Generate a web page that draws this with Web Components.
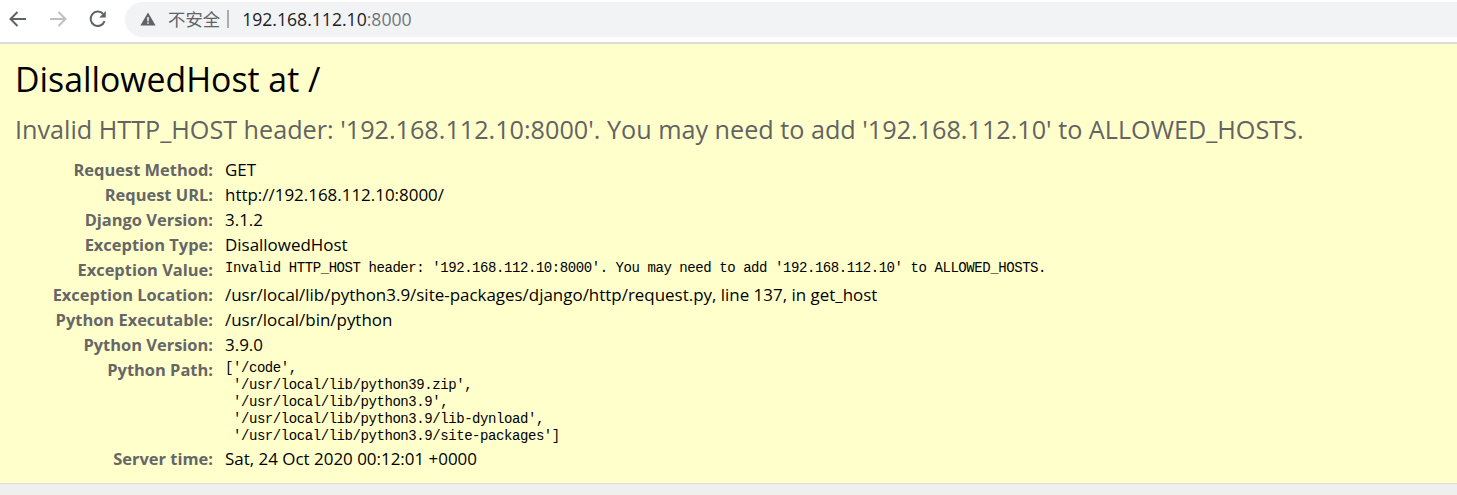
<!DOCTYPE html>
<html lang="zh">
<head>
<meta charset="utf-8">
<title>DisallowedHost at /</title>
<style>
  html, body { margin: 0; padding: 0; height: 100%; background: #efefef; overflow: hidden; }
  body { font-family: "Open Sans", "Noto Sans", sans-serif; display: flex; flex-direction: column; }
</style>
</head>
<body>
<browser-toolbar host-part="192.168.112.10" port-part=":8000"></browser-toolbar>
<error-summary>
  <span slot="title">DisallowedHost at /</span>
  <span slot="message">Invalid HTTP_HOST header: '192.168.112.10:8000'. You may need to add '192.168.112.10' to ALLOWED_HOSTS.</span>
  <meta-row label="Request Method:">GET</meta-row>
  <meta-row label="Request URL:">http://192.168.112.10:8000/</meta-row>
  <meta-row label="Django Version:">3.1.2</meta-row>
  <meta-row label="Exception Type:">DisallowedHost</meta-row>
  <meta-row label="Exception Value:" mono>Invalid HTTP_HOST header: '192.168.112.10:8000'. You may need to add '192.168.112.10' to ALLOWED_HOSTS.</meta-row>
  <meta-row label="Exception Location:">/usr/local/lib/python3.9/site-packages/django/http/request.py, line 137, in get_host</meta-row>
  <meta-row label="Python Executable:">/usr/local/bin/python</meta-row>
  <meta-row label="Python Version:">3.9.0</meta-row>
  <meta-row label="Python Path:" mono>['/code',
 '/usr/local/lib/python39.zip',
 '/usr/local/lib/python3.9',
 '/usr/local/lib/python3.9/lib-dynload',
 '/usr/local/lib/python3.9/site-packages']</meta-row>
  <meta-row label="Server time:">Sat, 24 Oct 2020 00:12:01 +0000</meta-row>
</error-summary>

<script>
class BrowserToolbar extends HTMLElement {
  constructor() {
    super();
    this.attachShadow({ mode: 'open' });
  }

  connectedCallback() {
    this.shadowRoot.innerHTML = `
      <style>
        :host { display: flex; align-items: flex-start; height: 42px; background: #fff; border-bottom: 2px solid #dcdcdc; flex: none; }
        .nav { display: flex; gap: 20px; padding: 9px 0 0 8px; width: 125px; box-sizing: border-box; flex: none; }
        svg { display: block; }
        .bar { flex: 1; height: 35px; margin-top: 2px; background: #f1f3f4; border-radius: 18px 0 0 18px; box-sizing: border-box;
               display: flex; align-items: center; padding: 0 0 2px 15px; font-size: 17.6px; }
        .warn { margin-right: 12px; }
        .label { color: #5f6368; font-family: "Noto Sans CJK SC", sans-serif; font-size: 17.4px; }
        .sep { width: 2px; height: 18px; background: #a9acb0; margin: 0 13px 0 7px; }
        .host { color: #202124; }
        .port { color: #70757a; }
      </style>
      <div class="nav">
        <svg width="20" height="20" viewBox="0 0 20 20" fill="none" stroke="#5f6368" stroke-width="2"><path d="M18 10H2.5M9.5 3l-7 7 7 7"/></svg>
        <svg width="20" height="20" viewBox="0 0 20 20" fill="none" stroke="#bdc1c6" stroke-width="2"><path d="M2 10h15.5M10.5 3l7 7-7 7"/></svg>
        <svg width="20" height="20" viewBox="0 0 20 20" fill="none" stroke="#5f6368" stroke-width="2"><path d="M16.6 12.2A7.2 7.2 0 1 1 15.2 5"/><path d="M17.8 2v6.6h-6.6z" fill="#5f6368" stroke="none"/></svg>
      </div>
      <div class="bar">
        <svg class="warn" width="16" height="14" viewBox="0 0 16 14"><path d="M8 0.5 15.6 13.5H.4z" fill="#5f6368"/><path d="M7.2 5h1.6v4.2H7.2zM7.2 10.2h1.6v1.6H7.2z" fill="#f1f3f4"/></svg>
        <span class="label">不安全</span><span class="sep"></span>
        <span class="host">${this.getAttribute('host-part')}</span><span class="port">${this.getAttribute('port-part')}</span>
      </div>
    `;
  }
}

class ErrorSummary extends HTMLElement {
  constructor() {
    super();
    this.attachShadow({ mode: 'open' });
  }

  connectedCallback() {
    this.shadowRoot.innerHTML = `
      <style>
        :host { display: block; flex: none; height: 440px; box-sizing: border-box; background: #ffc; border-bottom: 1px solid #ddd; padding: 13px 16px 0; color: #000; }
        h1 { margin: 0 0 0 -1px; font-size: 33.8px; font-weight: 400; line-height: 44px; }
        h2 { margin: 12px 0 12px -1px; font-size: 25.2px; font-weight: 400; line-height: 32px; color: #636363; white-space: nowrap; }
        .rows { display: flex; flex-direction: column; }
      </style>
      <h1><slot name="title"></slot></h1>
      <h2><slot name="message"></slot></h2>
      <div class="rows"><slot></slot></div>
    `;
  }
}

class MetaRow extends HTMLElement {
  constructor() {
    super();
    this.attachShadow({ mode: 'open' });
  }

  connectedCallback() {
    const mono = this.hasAttribute('mono');
    this.shadowRoot.innerHTML = `
      <style>
        :host { display: grid; grid-template-columns: 197px 1fr; column-gap: 12px; font-size: 16.95px; line-height: 25px; color: #000; }
        .k { text-align: right; font-weight: 700; font-size: 16.45px; color: #666; white-space: nowrap; padding-top: 1px; line-height: 24px; }
        .v { white-space: pre; }
        .v.mono { font-family: "Liberation Mono", "DejaVu Sans Mono", monospace; font-size: 14px; letter-spacing: -0.43px; line-height: 17px; padding: 3px 0 1px; }
      </style>
      <div class="k">${this.getAttribute('label')}</div>
      <div class="v ${mono ? 'mono' : ''}"><slot></slot></div>
    `;
  }
}

customElements.define('browser-toolbar', BrowserToolbar);
customElements.define('error-summary', ErrorSummary);
customElements.define('meta-row', MetaRow);
</script>
</body>
</html>
